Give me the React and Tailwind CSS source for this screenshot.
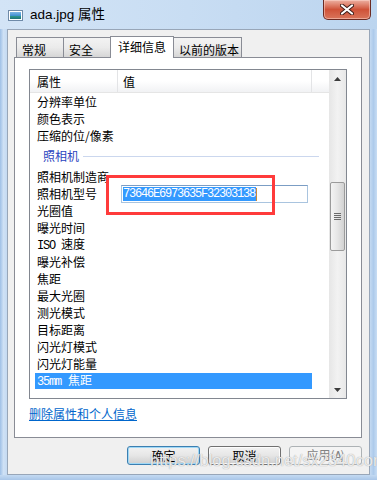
import React from "react";

const cjk = "font-['Noto_Sans_CJK_SC',sans-serif]";
const mono = "font-['Liberation_Mono',monospace] text-[12px] tracking-[-1.2px]";

function Row({ children }) {
  return (
    <div className="h-[17px] flex items-center pl-[7px] text-[12px] leading-[17px] text-black whitespace-nowrap">
      {children}
    </div>
  );
}

function Tab({ label, w, selected }) {
  if (selected) {
    return (
      <div
        className={`relative z-10 -mb-px -mr-px h-[22px] ${w} bg-white border border-b-0 border-[#898c95] flex items-start justify-center pt-[1px] text-[12px] leading-[17px]`}
      >
        {label}
      </div>
    );
  }
  return (
    <div
      className={`-mr-px h-[20px] ${w} border border-b-0 border-[#898c95] bg-gradient-to-b from-[#f3f3f3] via-[#ebebeb] to-[#d6d6d6] flex items-center pl-[5px] pt-[3px] text-[12px] leading-[17px]`}
    >
      {label}
    </div>
  );
}

export default function App() {
  return (
    <div className={`relative w-[377px] h-[480px] overflow-hidden flex flex-col bg-[#c6dcf3] ${cjk}`}>
      {/* title bar */}
      <div className="h-[29px] flex items-start justify-between bg-gradient-to-r from-[#d3e4f6] via-[#c8ddf3] to-[#bcd5ef]">
        <div className="flex items-center h-[30px] pl-[8px] gap-[7px]">
          <svg width="15" height="11" viewBox="0 0 15 11">
            <defs>
              <linearGradient id="ic" x1="0" y1="0" x2="0" y2="1">
                <stop offset="0" stopColor="#7fb6e6" />
                <stop offset="0.55" stopColor="#3d8fd0" />
                <stop offset="0.56" stopColor="#2e9a8c" />
                <stop offset="1" stopColor="#1e6f7a" />
              </linearGradient>
            </defs>
            <rect x="0.5" y="0.5" width="14" height="10" fill="#fff" stroke="#6f8aa8" />
            <rect x="2" y="2" width="11" height="7" fill="url(#ic)" />
          </svg>
          <span className="font-['Liberation_Sans','Noto_Sans_CJK_SC',sans-serif] text-[13.5px] leading-[16px] text-black">
            ada.jpg 属性
          </span>
        </div>
        <div className="mr-[6px] w-[48px] h-[20px] rounded-b-[5px] border border-t-0 border-[#6b2a22] bg-gradient-to-b from-[#ecb0a2] via-[#cf5238] to-[#d9745a] flex items-center justify-center shadow-[inset_0_0_0_1px_rgba(255,220,210,0.5)]">
          <svg width="14" height="11" viewBox="0 0 14 11">
            <path d="M2 1.5 L12 9.5 M12 1.5 L2 9.5" stroke="#3b1a16" strokeWidth="4" strokeLinecap="round" />
            <path d="M2 1.5 L12 9.5 M12 1.5 L2 9.5" stroke="#ffffff" strokeWidth="2.2" strokeLinecap="round" />
          </svg>
        </div>
      </div>

      {/* middle */}
      <div className="flex">
        <div className="w-[7px] h-[446px] bg-gradient-to-r from-[#9fc0e6] via-[#cfe1f5] to-[#c4daf2]" />
        <div className="w-[363px] h-[446px] border border-[#98a6b8] bg-[#f0f0f0] flex flex-col pt-[6px] pl-[6px] pr-[7px] text-black">
          {/* tabs */}
          <div className="h-[21px] flex items-end pl-[2px]">
            <Tab label="常规" w="w-[48px]" />
            <Tab label="安全" w="w-[48px]" />
            <Tab label="详细信息" w="w-[64px]" selected />
            <Tab label="以前的版本" w="w-[69px]" />
          </div>
          {/* panel */}
          <div className="w-[348px] h-[381px] border border-[#898c95] bg-white flex flex-col">
            <div className="mt-[11px] ml-[14px] w-[318px] h-[330px] border border-[#828790] flex overflow-hidden">
              <div className="w-[299px] flex flex-col">
                {/* header */}
                <div className="h-[23px] flex border-b border-[#e5e5e5] bg-gradient-to-b from-white via-white to-[#f1f2f4] text-[12px] leading-[24px]">
                  <div className="w-[88px] border-r border-[#e3e4e6] pl-[7px]">属性</div>
                  <div className="w-[194px] border-r border-[#e3e4e6] pl-[5px]">值</div>
                  <div className="flex-1" />
                </div>
                <Row>分辨率单位</Row>
                <Row>颜色表示</Row>
                <Row>压缩的位/像素</Row>
                <div className="h-[24px] flex items-center pl-[13px] gap-[4px]">
                  <span className="text-[12px] leading-[16px] text-[#2b45c0]">照相机</span>
                  <div className="w-[236px] h-px bg-[#cbd7ee]" />
                </div>
                <Row>照相机制造商</Row>
                <div className="h-[17px] flex text-[12px] leading-[17px] whitespace-nowrap">
                  <div className="w-[91px] pl-[7px]">照相机型号</div>
                  <div className="w-[187px] h-[18px] border border-[#a9c4df] border-t-[#7b9dc4] bg-white flex items-center pl-[1px]">
                    <span className={`bg-[#3399ff] text-white leading-[14px] pr-[1px] ${mono}`}>73646E6973635F32303138</span>
                    <span className="w-px h-[13px] bg-[#c78a3a]" />
                  </div>
                </div>
                <Row>光圈值</Row>
                <Row>曝光时间</Row>
                <Row>
                  <span>
                    <span className={mono}>ISO</span>
                    <span className="ml-[6px]">速度</span>
                  </span>
                </Row>
                <Row>曝光补偿</Row>
                <Row>焦距</Row>
                <Row>最大光圈</Row>
                <Row>测光模式</Row>
                <Row>目标距离</Row>
                <Row>闪光灯模式</Row>
                <Row>闪光灯能量</Row>
                <div className="h-[17px] flex items-center">
                  <div className="ml-[5px] w-[277px] h-[16px] bg-[#3399ff] text-white flex items-center pl-[2px] text-[12px] leading-[16px] whitespace-nowrap">
                    <span>
                      <span className={mono}>35mm</span>
                      <span className="ml-[7px]">焦距</span>
                    </span>
                  </div>
                </div>
              </div>
              {/* scrollbar */}
              <div className="w-[17px] flex flex-col bg-gradient-to-r from-[#e6e6e6] via-[#f2f2f2] to-[#e8e8e8]">
                <div className="h-[17px] flex items-center justify-center">
                  <svg width="7" height="4" viewBox="0 0 7 4">
                    <path d="M0 4 L3.5 0 L7 4 Z" fill="#3c3c3c" />
                  </svg>
                </div>
                <div className="h-[95px]" />
                <div className="h-[69px] mx-[1px] rounded-[2px] border border-[#9b9b9b] bg-gradient-to-r from-[#f4f4f4] via-[#e6e6e6] to-[#d2d2d2] flex flex-col items-center justify-center gap-[1px]">
                  <div className="w-[7px] h-px bg-[#6a6a6a]" />
                  <div className="w-[7px] h-px bg-[#6a6a6a]" />
                  <div className="w-[7px] h-px bg-[#6a6a6a]" />
                  <div className="w-[7px] h-px bg-[#6a6a6a]" />
                </div>
                <div className="flex-1" />
                <div className="h-[17px] flex items-center justify-center">
                  <svg width="7" height="4" viewBox="0 0 7 4">
                    <path d="M0 0 L7 0 L3.5 4 Z" fill="#3c3c3c" />
                  </svg>
                </div>
              </div>
            </div>
            <div className="mt-[8px] ml-[14px] text-[12px] leading-[14px] text-[#0066cc] underline">
              删除属性和个人信息
            </div>
          </div>
          {/* buttons */}
          <div className="mt-[8px] w-[348px] flex justify-end gap-[8px]">
            <div className="w-[73px] h-[19px] rounded-[3px] border border-[#3c7fb1] bg-gradient-to-b from-[#f2f2f2] via-[#e6e6e6] to-[#cfcfcf] shadow-[inset_0_0_0_1px_#9fd8f6] flex items-center justify-center text-[12px] leading-[17px]">
              确定
            </div>
            <div className="w-[73px] h-[19px] rounded-[3px] border border-[#707070] bg-gradient-to-b from-[#f2f2f2] via-[#e6e6e6] to-[#cfcfcf] shadow-[inset_0_0_0_1px_#fcfcfc] flex items-center justify-center text-[12px] leading-[17px]">
              取消
            </div>
            <div className="w-[73px] h-[19px] rounded-[3px] border border-[#adb2b5] bg-[#f4f4f4] flex items-center justify-center text-[12px] leading-[17px] text-[#838383]">
              <span>
                应用(<span className={mono}>A</span>)
              </span>
            </div>
          </div>
        </div>
        <div className="w-[7px] h-[446px] bg-gradient-to-r from-[#c4daf2] via-[#aecbeb] to-[#c8ddf4]" />
      </div>
      <div className="h-[5px] bg-gradient-to-b from-[#c4daf2] to-[#a9c6e8]" />

      {/* annotation overlay */}
      <div className="absolute left-[106px] top-[175px] w-[169px] h-[40px] border-[3px] border-[#ff3b3b]" />
      {/* watermark */}
      <div className="absolute left-[150px] top-[450px] font-['Liberation_Sans',sans-serif] text-[16.5px] leading-[20px] text-white/80 [text-shadow:0_0_1px_#8a8a8a] whitespace-nowrap pointer-events-none">
        https://blog.csdn.net/sx2340com
      </div>
    </div>
  );
}
